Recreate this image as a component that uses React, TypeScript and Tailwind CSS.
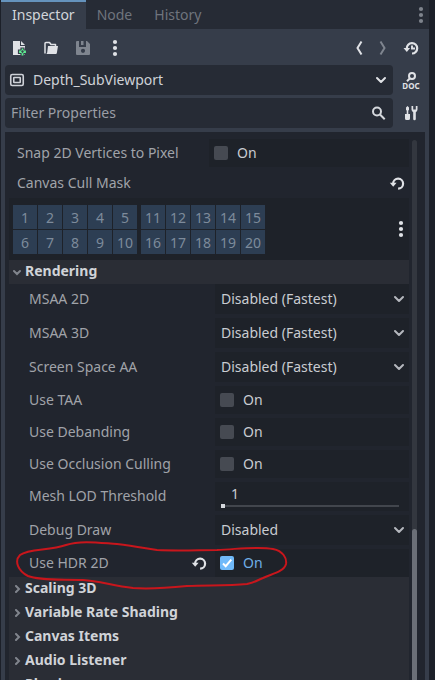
import { ReactNode } from "react";
import clsx from "clsx";

function Dots() {
  return (
    <svg width="6" height="18" viewBox="0 0 6 18" fill="currentColor" aria-hidden="true">
      {[3, 9, 15].map((y) => (
        <circle key={y} cx="3" cy={y} r="2.1" />
      ))}
    </svg>
  );
}

function ChevronDown({ className }: { className?: string }) {
  return (
    <svg width="12" height="8" viewBox="0 0 12 8" fill="none" stroke="currentColor" strokeWidth="2" strokeLinecap="round" strokeLinejoin="round" className={className} aria-hidden="true">
      <path d="M2 2l4 4 4-4" />
    </svg>
  );
}

function ResetIcon() {
  return (
    <svg width="16" height="16" viewBox="0 0 16 16" fill="none" aria-hidden="true">
      <path d="M4.1 8.5a5 5 0 1 1 5 5.200" stroke="currentColor" strokeWidth="2.200" />
      <path d="M.8 7.800h6.800L4.200 11.800z" fill="currentColor" />
    </svg>
  );
}

function IconButton({ label, className, children }: { label: string; className: string; children: ReactNode }) {
  return (
    <button type="button" aria-label={label} className={clsx("flex shrink-0 items-center justify-center", className)}>
      {children}
    </button>
  );
}

function Tabs() {
  const tabs = ["Inspector", "Node", "History"];
  return (
    <div role="tablist" className="flex h-[29px] items-stretch bg-[#262b35] pr-1">
      {tabs.map((tab, i) => (
        <button
          key={tab}
          type="button"
          role="tab"
          aria-selected={i === 0}
          className={clsx(
            "border-t-2 px-[11px] pb-[1px]",
            i === 0 ? "border-[#6593bd] bg-[#363d4a] text-[#d2d5da]" : "border-transparent text-[#6f747d]",
          )}
        >
          {tab}
        </button>
      ))}
      <IconButton label="Dock options" className="ml-auto w-2 text-[#7e838c]">
        <Dots />
      </IconButton>
    </div>
  );
}

function Toolbar() {
  return (
    <div className="flex h-9 items-stretch pl-[2px] pr-1 pt-[2px] text-[#e0e2e6]">
      <IconButton label="New resource" className="w-8">
        <svg width="16" height="16" viewBox="0 0 16 16" aria-hidden="true">
          <path d="M2 1h7v5h5v9H2z" fill="currentColor" />
          <path d="M10 1l4 4h-4z" fill="currentColor" />
          <path d="M10 8h3v2h2.500v3.500H13V16h-3v-2.500H7.500V10H10z" fill="#5fef93" stroke="#363d4a" strokeWidth="1.200" />
          <path d="M10 11.700h3M11.500 10.200v3" stroke="#363d4a" strokeWidth=".8" />
        </svg>
      </IconButton>
      <IconButton label="Load resource" className="w-8">
        <svg width="16" height="16" viewBox="0 0 16 16" aria-hidden="true">
          <path d="M2 13.500V3.500a1 1 0 0 1 1-1h3.500l1.500 2h4.500V6" fill="none" stroke="currentColor" strokeWidth="1.500" strokeLinejoin="round" />
          <path d="M5 6h10l-1.200 7.200a1 1 0 0 1-1 .8H2.500c1.300 0 1.500-.6 1.700-1.500z" fill="currentColor" />
        </svg>
      </IconButton>
      <IconButton label="Save resource" className="w-8 text-[#7f858f]">
        <svg width="16" height="16" viewBox="0 0 16 16" aria-hidden="true">
          <path fillRule="evenodd" fill="currentColor" d="M2 1a1 1 0 0 0-1 1v12a1 1 0 0 0 1 1h12a1 1 0 0 0 1-1V4l-3-3h-1v6H4V1zm6 7.700a2.100 2.100 0 1 1 0 4.200 2.100 2.100 0 0 1 0-4.200zM6 1h2.500v4H6z" />
        </svg>
      </IconButton>
      <IconButton label="Resource options" className="w-8">
        <Dots />
      </IconButton>
      <IconButton label="Previous object" className="ml-auto w-6">
        <svg width="8" height="16" viewBox="0 0 8 16" fill="none" stroke="currentColor" strokeWidth="2" aria-hidden="true">
          <path d="M6.500 1.500L2.500 8l4 6.500" />
        </svg>
      </IconButton>
      <IconButton label="Next object" className="mr-[2px] w-6 text-[#7f858f]">
        <svg width="8" height="16" viewBox="0 0 8 16" fill="none" stroke="currentColor" strokeWidth="2" aria-hidden="true">
          <path d="M1.500 1.500l4 6.500-4 6.500" />
        </svg>
      </IconButton>
      <IconButton label="Object history" className="w-7">
        <svg width="16" height="16" viewBox="0 0 16 16" fill="none" aria-hidden="true">
          <path d="M3.800 8.500a5.200 5.200 0 1 1 5.200 5" stroke="currentColor" strokeWidth="2.200" />
          <path d="M.5 8h6.600l-3.300 4z" fill="currentColor" />
          <path d="M9 5.500v3h3" stroke="currentColor" strokeWidth="1.900" />
        </svg>
      </IconButton>
    </div>
  );
}

function ObjectRow() {
  return (
    <div className="flex h-[30px] gap-1 px-1">
      <button type="button" className="flex min-w-0 flex-1 items-center rounded-sm bg-[#262b35] pl-1 pr-[6px] text-[#cfd2d8]">
        <svg width="16" height="16" viewBox="0 0 16 16" fill="none" stroke="currentColor" aria-hidden="true">
          <rect x="1.750" y="2.500" width="12.500" height="11" rx="1.500" strokeWidth="1.600" />
          <rect x="4.750" y="5.500" width="6.500" height="5" rx=".5" strokeWidth="1.600" />
        </svg>
        <span className="ml-2 pb-[1px]">Depth_SubViewport</span>
        <ChevronDown className="ml-auto text-[#e0e2e6]" />
      </button>
      <IconButton label="Open documentation" className="w-7 flex-col text-[#e0e2e6]">
        <svg width="14" height="10" viewBox="0 0 14 10" fill="none" stroke="currentColor" strokeWidth="2" aria-hidden="true">
          <circle cx="8" cy="4" r="3" />
          <path d="M6 6.200L3 9.200" />
        </svg>
        <span className="text-[8px] font-bold leading-[7px]">DOC</span>
      </IconButton>
    </div>
  );
}

function FilterRow() {
  return (
    <div className="mt-[3px] flex h-[30px] gap-1 px-1">
      <label className="flex min-w-0 flex-1 items-center rounded-sm bg-[#262b35] pl-[6px] pr-[6px]">
        <input
          type="text"
          aria-label="Filter Properties"
          placeholder="Filter Properties"
          className="min-w-0 flex-1 bg-transparent pb-[1px] outline-none placeholder:text-[#9a9ea6]"
        />
        <svg width="16" height="16" viewBox="0 0 16 16" fill="none" stroke="#d5d8dd" strokeWidth="2" aria-hidden="true">
          <circle cx="6" cy="6.500" r="4" />
          <path d="M9 9.500l4.700 4.700" />
        </svg>
      </label>
      <IconButton label="Property tools" className="w-7 text-[#e0e2e6]">
        <svg width="16" height="16" viewBox="0 0 16 16" fill="currentColor" aria-hidden="true">
          <path d="M4.500 1L6 2.500V5l-.7.500V9H7v4.500A1.500 1.500 0 0 1 5.500 15h-2A1.500 1.500 0 0 1 2 13.500V9h1.700V5.500L3 5V2.500z" />
          <path d="M8.500 1v3.500A3 3 0 0 0 10.200 7.200V14a1.300 1.300 0 0 0 2.600 0V7.200A3 3 0 0 0 14.500 4.500V1h-1.700v3.500h-2.600V1z" />
        </svg>
      </IconButton>
    </div>
  );
}

function Check({ id, checked }: { id: string; checked?: boolean }) {
  return (
    <div className="flex flex-1 items-center gap-[9px] pl-[5px]">
      <span className="relative flex">
        <input
          id={id}
          type="checkbox"
          defaultChecked={checked}
          className="size-[14px] appearance-none rounded-xs bg-[#464a52] checked:bg-[#70bafa]"
        />
        {checked && (
          <svg width="14" height="14" viewBox="0 0 14 14" fill="none" stroke="#fff" strokeWidth="2" className="pointer-events-none absolute inset-0" aria-hidden="true">
            <path d="M3 7.500l2.700 2.700L11.300 3.700" />
          </svg>
        )}
      </span>
      <label htmlFor={id} className={checked ? "text-[#70aee6]" : "text-[#c9ccd1]"}>
        On
      </label>
    </div>
  );
}

function Choice({ id, value }: { id: string; value: string }) {
  return (
    <div className="relative flex flex-1 items-center">
      <select id={id} defaultValue={value} className="h-full w-full appearance-none bg-transparent pl-[6px] text-[#c9ccd1] outline-none">
        <option>{value}</option>
      </select>
      <ChevronDown className="pointer-events-none absolute right-1 text-[#b5b8be]" />
    </div>
  );
}

function Amount({ id }: { id: string }) {
  return (
    <div className="flex flex-1 flex-col pl-[6px] pr-[10px] pt-[1px]">
      <output htmlFor={id} className="pl-[10px] pt-[1px] leading-5 text-[#c9ccd1]">
        1
      </output>
      <input
        id={id}
        type="range"
        min="1"
        max="1024"
        defaultValue="1"
        className="h-1 w-full appearance-none bg-transparent [&::-webkit-slider-runnable-track]:h-[2px] [&::-webkit-slider-runnable-track]:bg-[#42464d] [&::-webkit-slider-thumb]:-mt-[1px] [&::-webkit-slider-thumb]:size-1 [&::-webkit-slider-thumb]:appearance-none [&::-webkit-slider-thumb]:bg-[#d5d8dd]"
      />
    </div>
  );
}

type Property = { id: string; label: string; kind: "choice" | "check" | "amount"; value?: string; marked?: boolean };

const rendering: Property[] = [
  { id: "msaa-2d", label: "MSAA 2D", kind: "choice", value: "Disabled (Fastest)" },
  { id: "msaa-3d", label: "MSAA 3D", kind: "choice", value: "Disabled (Fastest)" },
  { id: "ssaa", label: "Screen Space AA", kind: "choice", value: "Disabled (Fastest)" },
  { id: "taa", label: "Use TAA", kind: "check" },
  { id: "debanding", label: "Use Debanding", kind: "check" },
  { id: "occlusion", label: "Use Occlusion Culling", kind: "check" },
  { id: "lod", label: "Mesh LOD Threshold", kind: "amount" },
  { id: "debug-draw", label: "Debug Draw", kind: "choice", value: "Disabled" },
  { id: "hdr-2d", label: "Use HDR 2D", kind: "check", marked: true },
];

function Circled() {
  return (
    <svg width="280" height="52" viewBox="0 0 280 52" fill="none" stroke="#c8161c" strokeWidth="2" strokeLinecap="round" className="pointer-events-none absolute -top-2 left-0" aria-hidden="true">
      <path d="M11 14C20 7 40 10 57 4C72 -1 92 2 108 3C125 5 135 7 148 9C170 10 190 9 208 9C230 8 250 5 264 8C274 10 278 17 277 23C275 31 262 33 254 37C248 39 248 41 238 43C218 45 198 44 178 45C158 47 138 48 124 47C104 45 91 40 74 39C54 38 31 40 19 35C9 30 5 20 11 14Z" />
    </svg>
  );
}

function PropertyRow({ id, label, kind, value, marked }: Property) {
  return (
    <div className={clsx("relative flex", { choice: "h-[30px]", check: "h-7", amount: "h-[29px]" }[kind])}>
      <div className="flex w-[206px] shrink-0 items-center justify-between pl-5">
        <label htmlFor={id} className="pb-[1px]">
          {label}
        </label>
        {marked && (
          <IconButton label={`Reset ${label}`} className="w-8 text-[#e0e2e6]">
            <ResetIcon />
          </IconButton>
        )}
      </div>
      <div className="flex min-w-0 flex-1 bg-[#1e2229]">
        {kind === "choice" && <Choice id={id} value={value ?? ""} />}
        {kind === "check" && <Check id={id} checked={marked} />}
        {kind === "amount" && <Amount id={id} />}
      </div>
      {marked && <Circled />}
    </div>
  );
}

function LayerGrid() {
  return (
    <div className="flex h-[62px] items-center bg-[#1e2229] pl-1">
      <div className="flex gap-1">
        {[0, 10].map((base) => (
          <div key={base} className="grid grid-cols-5 gap-px">
            {Array.from({ length: 10 }, (_, i) => (
              <button key={i} type="button" className="size-6 bg-[#2d3e53] pt-[2px] text-[#7d8b9b]">
                {base + i + 1}
              </button>
            ))}
          </div>
        ))}
      </div>
      <IconButton label="Layer options" className="ml-auto w-4 text-[#e0e2e6]">
        <Dots />
      </IconButton>
    </div>
  );
}

function Section({ title, open }: { title: string; open?: boolean }) {
  return (
    <button type="button" aria-expanded={!!open} className="flex h-6 w-full items-center bg-[#2a2d35] pl-1 font-bold text-[#d0d3d8]">
      <svg width="8" height="8" viewBox="0 0 8 8" fill="none" stroke="#81858d" strokeWidth="2" strokeLinecap="round" className="mr-1" aria-hidden="true">
        <path d={open ? "M1 3l3 3 3-3" : "M3 1l3 3-3 3"} />
      </svg>
      <span className="pb-[2px]">{title}</span>
    </button>
  );
}

export default function App() {
  return (
    <div className="flex h-screen overflow-hidden bg-[#1c2029] pl-px pr-[6px] font-['Noto_Sans','Open_Sans',sans-serif] text-[14px] leading-5 text-[#a0a3a9]">
      <main className="flex min-w-0 flex-1 flex-col bg-[#363d4a]">
        <Tabs />
        <Toolbar />
        <ObjectRow />
        <FilterRow />
        <div className="mx-1 mt-1 flex min-h-0 flex-1 bg-[#21252e] pl-1 pr-2 pt-[7px]">
          <div className="min-w-0 flex-1 overflow-hidden">
            <div className="flex h-7">
              <label htmlFor="snap" className="w-[200px] shrink-0 self-center pb-[1px] pl-2">
                Snap 2D Vertices to Pixel
              </label>
              <div className="flex flex-1 bg-[#1e2229]">
                <Check id="snap" />
              </div>
            </div>
            <div className="mt-px flex h-[30px] items-stretch justify-between pl-2">
              <span className="self-center pb-[1px]">Canvas Cull Mask</span>
              <IconButton label="Reset Canvas Cull Mask" className="w-6 text-[#e0e2e6]">
                <ResetIcon />
              </IconButton>
            </div>
            <LayerGrid />
            <Section title="Rendering" open />
            <div className="flex flex-col gap-1">
              {rendering.map((p) => (
                <PropertyRow key={p.id} {...p} />
              ))}
            </div>
            {["Scaling 3D", "Variable Rate Shading", "Canvas Items", "Audio Listener", "Physics"].map((title) => (
              <Section key={title} title={title} />
            ))}
          </div>
          <div className="ml-[3px] mt-px flex w-[5px] flex-col rounded-t-full bg-[#33373f]">
            <div className="mt-auto h-[28%] rounded-t-full bg-[#6b6f77]" />
          </div>
        </div>
      </main>
    </div>
  );
}
